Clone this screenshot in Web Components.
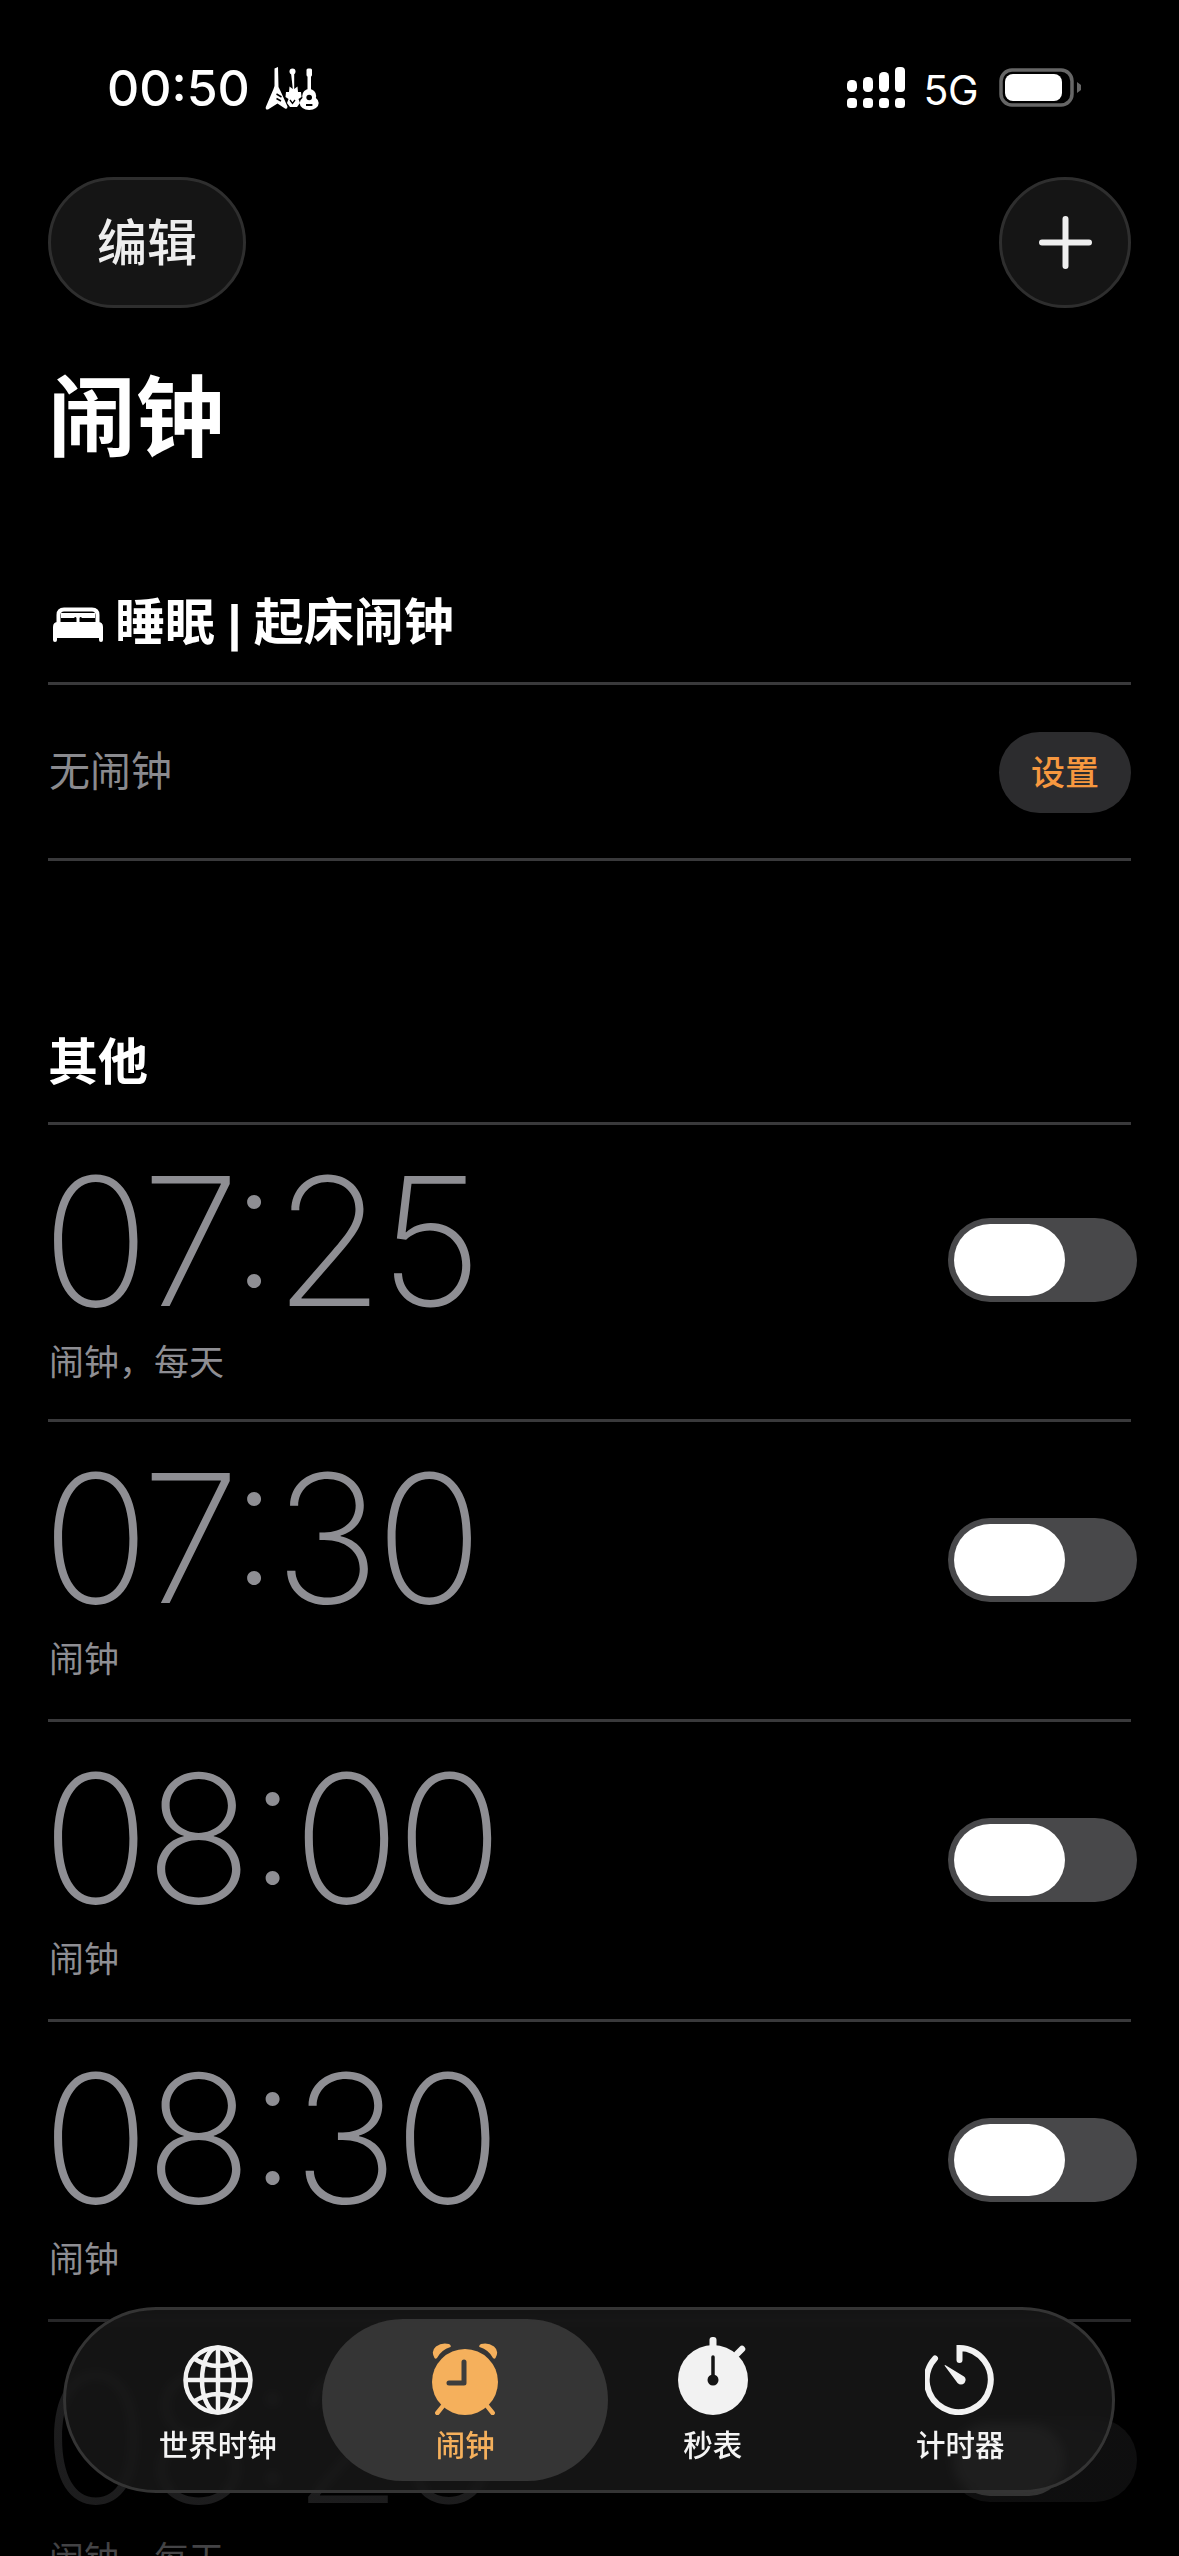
<!DOCTYPE html>
<html lang="zh"><head><meta charset="utf-8"><title>闹钟</title>
<style>
html,body{margin:0;padding:0;background:#000}
body{width:1179px;height:2556px;overflow:hidden;position:relative;color:#fff;font-family:Inter,"Noto Sans CJK SC",sans-serif}
</style></head>
<body>
<clock-app></clock-app>
<script>
function def(name,css,html){
  customElements.define(name,class extends HTMLElement{
    constructor(){super();const r=this.attachShadow({mode:'open'});
      r.innerHTML='<style>'+css+'</style>'+(typeof html==='function'?'':html);}
    connectedCallback(){
      if(typeof html==='function'){this.shadowRoot.innerHTML='<style>'+css+'</style>'+html(this);}
    }
  });
}
const CJK='Inter,"Noto Sans CJK SC",sans-serif';
const ICONS={
 guitars:`<svg width="54" height="43" viewBox="0 0 54 43" fill="#fff"><path d="M9.500 1.500 13 0 13.500 20 15.500 24 22.500 39.500Q22.500 42.500 20 41.500L12.500 36.500 3 42.500Q.200 43 .800 40L8.500 22 9.500 19Z"/><path d="M11.500 27l5 3M11.500 31.500l4.500 2.500" stroke="#000" stroke-width="1.500"/><circle cx="27.500" cy="4.500" r="3"/><path d="M25.800 4h3.400v18l3.300-2.500 .5 5.500 3 0 .5 5-3 2 1.500 4-3 4h-7l-3-4 1.500-4-3-2 .5-5 3 0 .5-5.500 3.300 2.500Z"/><path d="M25 33l2.500 3.500 2.500-3.500" stroke="#000" stroke-width="1.300" fill="none"/><rect x="41.500" y="1.500" width="5.500" height="8" rx="1.500"/><rect x="42.500" y="8" width="3.500" height="18"/><circle cx="44.200" cy="29" r="7"/><ellipse cx="44.200" cy="36" rx="9.500" ry="7"/><circle cx="44.200" cy="30.500" r="2.800" fill="#000"/><rect x="41" y="37" width="6.400" height="2" fill="#000"/></svg>`,
 signal:`<svg width="58" height="41" viewBox="0 0 58 41" fill="#fff"><rect x="0" y="13" width="10" height="12" rx="4.500"/><rect x="16" y="10" width="10" height="15" rx="4.500"/><rect x="32" y="5" width="10" height="20" rx="4.500"/><rect x="48" y="0" width="10" height="25" rx="4"/><rect x="0" y="31" width="10" height="10" rx="3.500"/><rect x="16" y="31" width="10" height="10" rx="3.500"/><rect x="32" y="31" width="10" height="10" rx="3.500"/><rect x="48" y="31" width="10" height="10" rx="3.500"/></svg>`,
 battery:`<svg width="82" height="39" viewBox="0 0 82 39"><rect x="2" y="2" width="71" height="35" rx="11" fill="none" stroke="#666" stroke-width="3.500"/><rect x="6" y="6" width="57" height="27" rx="8" fill="#fff"/><path d="M78 14l4 3q1 2.500 0 5l-4 3Z" fill="#666"/></svg>`,
 plus:`<svg width="53" height="53" viewBox="0 0 53 53" stroke="#eee" stroke-width="6" stroke-linecap="round"><path d="M26.500 3v47M3 26.500h47"/></svg>`,
 bed:`<svg width="50" height="35" viewBox="0 0 50 35" fill="#fff"><path d="M5.500 17V8q0-5.500 5.500-5.500h28Q44.500 2.500 44.500 8v9" fill="none" stroke="#fff" stroke-width="4"/><path d="M8 6h34v5H29q-1.500-2-2.500 0v5h-3v-5q-1-2-2.500 0H8Z"/><path d="M0 20q0-5 5-5h40q5 0 5 5v13q0 2-2 2t-2-2v-2H4v2q0 2-2 2t-2-2Z"/></svg>`,
 globe:`<svg width="70" height="70" viewBox="0 0 70 70" fill="none" stroke="#f2f2f2" stroke-width="4.500"><circle cx="35" cy="35" r="32.500"/><ellipse cx="35" cy="35" rx="16" ry="32.500"/><path d="M35 2.500v65M2.500 35h65M10 13Q35 29 60 13M10 57Q35 41 60 57"/></svg>`,
 alarm:`<svg width="66" height="72" viewBox="0 0 66 72" fill="#f5b05c"><path d="M5.300 70 12 61.700M60.700 70 54 61.700" stroke="#f5b05c" stroke-width="4.500" stroke-linecap="round"/><path d="M2.500 15Q-1.500 8 4 3.500 10 -1 17 1 19.500 2.500 18.500 4 9 7 5 15 3.500 16.500 2.500 15ZM63.500 15Q67.500 8 62 3.500 56 -1 49 1 46.500 2.500 47.500 4 57 7 61 15 62.500 16.500 63.500 15Z"/><circle cx="33" cy="39" r="33"/><path d="M32 19v21H17" fill="none" stroke="#3d3d3d" stroke-width="5" stroke-linecap="round" stroke-linejoin="round"/></svg>`,
 stopwatch:`<svg width="70" height="78" viewBox="0 0 70 78" fill="#f2f2f2"><rect x="31.500" y="0" width="7" height="12" rx="3"/><path d="M59 17l5-5" stroke="#f2f2f2" stroke-width="6.500" stroke-linecap="round"/><circle cx="35" cy="43" r="35"/><path d="M35 20v24" stroke="#141414" stroke-width="3.500" stroke-linecap="round"/><circle cx="35" cy="43" r="5.500" fill="#141414"/></svg>`,
 timer:`<svg width="70" height="70" viewBox="0 0 70 70" fill="none" stroke="#f2f2f2" stroke-width="6" stroke-linecap="round"><path d="M34.500 15V3A32 32 0 1 1 10 13.500"/><path d="M19.500 20.500Q20 19.500 21 20.500L39 31.500Q42 34 39.500 38 36 41 32.500 38Z" fill="#f2f2f2" stroke="none"/></svg>`
};
def('app-icon',':host{display:inline-flex;line-height:0}',e=>ICONS[e.getAttribute('name')]||'');

def('status-bar',`:host{display:flex;justify-content:space-between;box-sizing:border-box;height:177px;padding:67px 98px 0 107px;font-family:Inter,sans-serif;color:#fff}
.l,.r{display:flex;align-items:flex-start}
.t{font-size:50px;font-weight:500;line-height:42px;font-feature-settings:"case","calt"}
.g{margin:0 0 0 15px}
.n{font-size:41px;font-weight:400;line-height:40px;margin:3px 21px 0 18px;letter-spacing:-.5px}
.b{margin-top:1px}`,
`<div class="l"><span class="t">00:50</span><app-icon class="g" name="guitars"></app-icon></div>
 <div class="r"><app-icon name="signal"></app-icon><span class="n">5G</span><app-icon class="b" name="battery"></app-icon></div>`);

def('glass-button',`:host{display:inline-flex;align-items:center;justify-content:center;box-sizing:border-box;height:131px;min-width:131px;width:198px;border-radius:66px;background:#151515;border:3px solid #2e2e2e;color:#eee;font:500 50px/1 ${CJK}}
:host([round]){width:132px}`,`<slot></slot>`);

def('nav-row',`:host{display:flex;justify-content:space-between;padding:0 48px}`,`<slot></slot>`);

def('page-title',`:host{display:block;margin:59px 48px 0;font:700 88px/100px ${CJK};color:#fff}`,`<slot></slot>`);

def('section-head',`:host{display:flex;align-items:center;gap:12px;margin:0 48px;padding:0 0 29px;height:60px;border-bottom:3px solid #39393b;font:700 50px/60px "Liberation Sans","Noto Sans CJK SC",sans-serif;word-spacing:-1.5px;color:#fff;box-sizing:content-box}
::slotted(app-icon){margin:2px 0 0 5px}`,`<slot name="icon"></slot><slot></slot>`);

def('sleep-row',`:host{display:flex;align-items:center;justify-content:space-between;height:173px;margin:0 48px;border-bottom:3px solid #39393b}
.n{font:400 41px/1 ${CJK};color:#8a8a8e;margin-left:1px}
.b{display:flex;align-items:center;justify-content:center;width:132px;height:81px;margin-top:2px;border-radius:41px;background:#2c2c2e;color:#f7983f;font:500 34px/1 ${CJK}}`,
`<span class="n"><slot></slot></span><span class="b">设置</span>`);

def('alarm-toggle',`:host{display:block;box-sizing:border-box;width:189px;height:84px;border-radius:42px;background:#48484a;padding:6px}
.k{display:block;width:111px;height:72px;border-radius:36px;background:#fff}`,`<span class="k"></span>`);

def('alarm-row',`:host{display:flex;justify-content:space-between;align-items:flex-start;box-sizing:border-box;height:300px;margin:0 48px;border-bottom:3px solid #39393b}
.t{font:250 178px/178px Inter,sans-serif;font-feature-settings:"case","calt";color:#8e8e93;margin:28px 0 0 -6px;height:178px;letter-spacing:-4.500px;white-space:nowrap}
.l{font:400 35px/44px ${CJK};color:#8e8e93;margin:8.500px 0 0 1px}
alarm-toggle{margin:var(--tt,96px) -6px 0 0}`,
e=>`<div><div class="t">${e.getAttribute('time')}</div><div class="l">${e.getAttribute('label')}</div></div><alarm-toggle></alarm-toggle>`);

def('tab-item',`:host{position:relative;display:flex;flex-direction:column;align-items:center;width:248px;height:100%;box-sizing:border-box;padding-top:30px;color:#f4f4f4;font:500 29.500px/34px ${CJK}}
:host([active]){color:#f5b05c}
.p{display:none;position:absolute;left:-20px;right:-19px;top:9px;bottom:9px;border-radius:81px;background:#353535}
:host([active]) .p{display:block}
.i{position:relative;height:75px;display:flex;align-items:flex-end;justify-content:center}
.l{position:relative;margin-top:13px}`,
e=>`<span class="p"></span><div class="i"><slot></slot></div><div class="l">${e.getAttribute('label')}</div>`);

def('tab-bar',`:host{position:absolute;left:63px;top:2307px;box-sizing:border-box;width:1052px;height:186px;border-radius:93px;border:3px solid #343434;background:rgba(25,25,25,.8);-webkit-backdrop-filter:blur(5px);backdrop-filter:blur(5px);display:flex;padding:0 28px}`,`<slot></slot>`);

def('fade-veil',`:host{position:absolute;left:0;right:0;top:2310px;height:246px;background:linear-gradient(to bottom,rgba(0,0,0,.2) 0,rgba(0,0,0,.8) 60px,rgba(0,0,0,.8) 195px,rgba(0,0,0,.5) 240px)}`,``);

def('clock-app',`:host{display:block}`,`
<status-bar></status-bar>
<nav-row><glass-button>编辑</glass-button><glass-button round><app-icon name="plus"></app-icon></glass-button></nav-row>
<page-title>闹钟</page-title>
<section-head style="margin-top:126px"><app-icon slot="icon" name="bed"></app-icon>睡眠 | 起床闹钟</section-head>
<sleep-row>无闹钟</sleep-row>
<section-head style="margin-top:172px">其他</section-head>
<alarm-row time="07:25" label="闹钟，每天" style="height:297px;--tt:93px"></alarm-row>
<alarm-row time="07:30" label="闹钟"></alarm-row>
<alarm-row time="08:00" label="闹钟"></alarm-row>
<alarm-row time="08:30" label="闹钟"></alarm-row>
<alarm-row time="08:25" label="闹钟，每天"></alarm-row>
<fade-veil></fade-veil>
<tab-bar>
 <tab-item label="世界时钟"><app-icon name="globe"></app-icon></tab-item>
 <tab-item label="闹钟" active><app-icon name="alarm"></app-icon></tab-item>
 <tab-item label="秒表"><app-icon name="stopwatch"></app-icon></tab-item>
 <tab-item label="计时器"><app-icon name="timer"></app-icon></tab-item>
</tab-bar>`);
</script>
</body></html>
